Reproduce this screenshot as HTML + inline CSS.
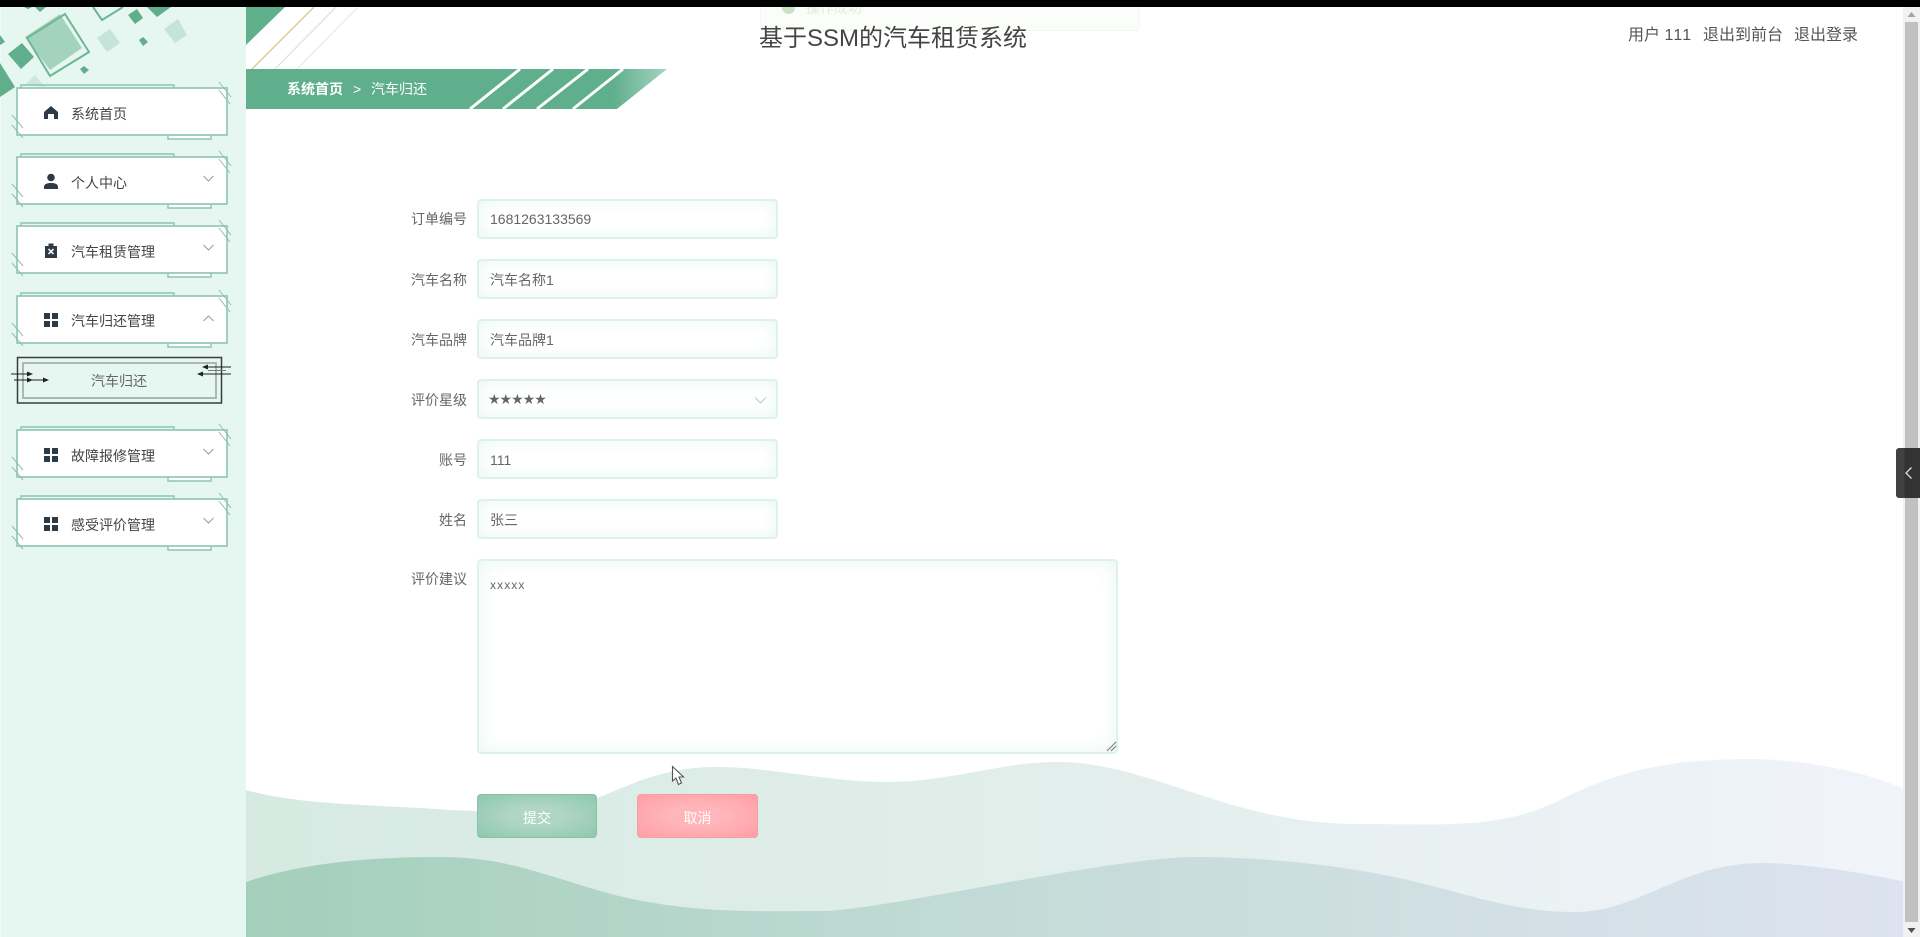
<!DOCTYPE html>
<html><head><meta charset="utf-8"><title>汽车归还</title>
<style>
*{box-sizing:border-box}
html,body{margin:0;padding:0;width:1920px;height:937px;overflow:hidden;background:#fff}
body{position:relative;font-family:"Liberation Sans","Noto Sans CJK SC",sans-serif;color:#606266;font-size:14px}
#w{position:absolute;left:0;top:0;width:1920px;height:937px;filter:blur(.35px)}
.a{position:absolute;white-space:nowrap}
.m{left:71px;width:130px;height:20px;line-height:20px;font-size:14px;color:#444;top:0;margin-top:.5px}
.l{left:367px;width:100px;height:20px;line-height:20px;text-align:right;color:#666;font-size:14px;margin-top:1px}
.i{left:477px;width:301px;height:40px;border:2px solid #dcf2ea;border-radius:4px;background:#fff;box-shadow:inset 0 0 16px #e8f7f2;line-height:36px;padding-left:11px;color:#666;font-size:14px}
.c{line-height:38px}
.b{top:794px;height:44px;border-radius:4px;color:#fff;text-align:center;line-height:46px;font-size:14px}
</style></head>
<body><div id="w">
<div class="a" style="left:0;top:0;width:246px;height:937px;background:#e5f7f0;border-left:1px solid #f2f8f5"></div>

<svg class="a" style="left:0;top:0" width="1920" height="937" viewBox="0 0 1920 937">
<defs>
<linearGradient id="w1" x1="245" x2="1906" y1="0" y2="0" gradientUnits="userSpaceOnUse"><stop offset="0" stop-color="#d6eae2"/><stop offset=".5" stop-color="#e2eeeb"/><stop offset="1" stop-color="#f1f4fb"/></linearGradient>
<linearGradient id="w2" x1="245" x2="1906" y1="0" y2="0" gradientUnits="userSpaceOnUse"><stop offset="0" stop-color="#a3cfbb"/><stop offset=".5" stop-color="#c6dcd9"/><stop offset="1" stop-color="#dde3f0"/></linearGradient>
<linearGradient id="bc" x1="246" x2="667" y1="0" y2="0" gradientUnits="userSpaceOnUse"><stop offset="0" stop-color="#5fae8c"/><stop offset=".87" stop-color="#5fae8c"/><stop offset="1" stop-color="#a5d4c0"/></linearGradient>
<symbol id="card" viewBox="0 0 240 70" width="240" height="70">
<path d="M21 15V12H174V15" fill="none" stroke="#8cc5ad" stroke-width="1.4"/>
<path d="M168 62V66H211V62" fill="#fff" stroke="#8cc5ad" stroke-width="1.4"/>
<rect x="17" y="15" width="210" height="47" fill="#fff" stroke="#8cc5ad" stroke-width="1.6"/>
<path d="M219 9L231 24M219 17L230 31M12 42L23 55M12 52L23 65" stroke="#8fbfaa" stroke-width="1" fill="none"/>
</symbol>
</defs>

<path d="M24 7L28 9 32 7ZM35 7L40 12 46 7Z" fill="#5fae8c"/>
<path d="M147 7H171L157 17Z" fill="#5fae8c"/>
<path d="M93 7L102 20 123 7" fill="none" stroke="#6fb696" stroke-width="2"/>
<path d="M128 15L137 9 143 18 135 24Z" fill="#5fae8c"/>
<path d="M0 63L15 87 0 97ZM0 35L5 42 0 45Z" fill="#5fae8c"/>
<path d="M8 54L22 43 34 57 21 69Z" fill="#5fae8c"/>
<path d="M97 38L110 29 120 43 107 52Z" fill="#c4e4d8"/>
<path d="M164 29L178 19 187 35 175 43Z" fill="#c4e4d8"/>
<path d="M139 40L143 37 148 42 143 46Z" fill="#5fae8c"/>
<path d="M80 69L84 66 89 70 84 74Z" fill="#5fae8c"/>
<path d="M25 85L35 75 45 87Z" fill="#cde9de"/>
<path d="M25 37L60 14 82 48 50 70Z" fill="#a3d3bd"/>
<path d="M27 38L65 14 89 52 50 76Z" fill="none" stroke="#6fb696" stroke-width="2"/>

<path d="M246 7H285L246 45Z" fill="#5fae8c"/>
<path d="M252 69L314 7" stroke="#d8cd92" stroke-width="1.5"/>
<path d="M275 69L336 7" stroke="#e2e2e2" stroke-width="1.3"/>
<path d="M297 69L358 7" stroke="#ececec" stroke-width="1.3"/>

<path d="M246 69H667L617 109H246Z" fill="url(#bc)"/>
<path d="M470 109L520 69M503 109L553 69M537 109L588 69M573 109L623 69" stroke="#fff" stroke-width="3"/>

<path d="M246 790C300 806 390 805 450 810C500 812 560 815 600 797C640 780 670 767 717 767C770 767 830 782 886 782C950 782 1000 762 1057 762C1150 762 1230 824 1356 824C1440 824 1500 830 1560 800C1620 770 1670 759 1751 759C1790 759 1860 768 1906 790V937H246Z" fill="url(#w1)"/>
<path d="M246 882C310 860 390 857 437 857C500 857 530 870 597 890C680 915 760 911 822 911C880 911 1110 857 1195 857C1260 857 1350 865 1420 883C1480 898 1520 912 1575 912C1640 912 1680 863 1762 863C1800 863 1860 872 1906 882V937H246Z" fill="url(#w2)"/>

<use href="#card" x="0" y="73"/>
<use href="#card" x="0" y="142"/>
<use href="#card" x="0" y="211"/>
<use href="#card" x="0" y="281"/>
<use href="#card" x="0" y="415"/>
<use href="#card" x="0" y="484"/>

<rect x="17.5" y="357.5" width="204" height="45.5" fill="none" stroke="#3a3f3d" stroke-width="1.5"/>
<rect x="23" y="363" width="193" height="35" fill="none" stroke="#a8b8b2" stroke-width="2"/>
<g stroke="#222" stroke-width="1" fill="#222">
<path d="M11 374H29M14 380H45M231 367H206M231 374H201" fill="none"/>
<path d="M33 374L27 371.5V376.5ZM49 380L43 377.5V382.5ZM202 367L208 364.5V369.5ZM197 374L203 371.5V376.5ZM33 380L27 377.5V382.5Z" stroke="none"/>
</g>
<path d="M208 370.5H226" stroke="#777" stroke-width="1"/>

<g fill="#2f3a47">
<path d="M51 106L58 112V119H54V114H48V119H44V112Z"/>
<circle cx="51" cy="177.5" r="3.8"/><path d="M44 189V187C44 184 47 183 51 183S58 184 58 187V189Z"/>
<path d="M45 246H48.5V243.5H53.5V246H57V258H45Z"/><path d="M48.5 249L53.5 254M53.5 249L48.5 254" stroke="#fff" stroke-width="1.5" fill="none"/>
<path d="M44 313H50V319H44ZM52 313H58V319H52ZM44 321H50V327H44ZM52 321H58V327H52Z"/>
<path d="M44 448H50V454H44ZM52 448H58V454H52ZM44 456H50V462H44ZM52 456H58V462H52Z"/>
<path d="M44 517H50V523H44ZM52 517H58V523H52ZM44 525H50V531H44ZM52 525H58V531H52Z"/>
</g>
<g fill="none" stroke="#9a9fa5" stroke-width="1.1">
<path d="M203.5 176L208.5 181L213.5 176"/>
<path d="M203.5 245L208.5 250L213.5 245"/>
<path d="M203.5 321L208.5 316L213.5 321"/>
<path d="M203.5 449L208.5 454L213.5 449"/>
<path d="M203.5 518L208.5 523L213.5 518"/>
</g>
</svg>

<div class="a m" style="top:103px">系统首页</div>
<div class="a m" style="top:172px">个人中心</div>
<div class="a m" style="top:241px">汽车租赁管理</div>
<div class="a m" style="top:310px">汽车归还管理</div>
<div class="a" style="left:60px;width:118px;top:371px;height:20px;line-height:20px;text-align:center;color:#666">汽车归还</div>
<div class="a m" style="top:445px">故障报修管理</div>
<div class="a m" style="top:514px">感受评价管理</div>

<div class="a" style="left:760px;top:7px;width:380px;height:24px;background:#fbfdfa;border:1px solid #f6f8f5;border-top:0;border-radius:0 0 4px 4px"></div>
<div class="a" style="left:782px;top:7px;width:13px;height:7px;background:#c8e3be;border-radius:0 0 7px 7px"></div>
<div class="a" style="left:806px;top:1px;height:15px;line-height:15px;font-size:14px;color:#e0eeda">操作成功</div>

<div class="a" style="left:659px;width:468px;top:23px;height:32px;line-height:32px;text-align:center;font-size:24px;color:#444">基于SSM的汽车租赁系统</div>
<div class="a" style="left:1628px;top:25px;height:22px;line-height:22px;font-size:16px;color:#555">用户 <span style="letter-spacing:1.2px">111</span></div>
<div class="a" style="left:1703px;top:25px;height:22px;line-height:22px;font-size:16px;color:#555">退出到前台</div>
<div class="a" style="left:1794px;top:25px;height:22px;line-height:22px;font-size:16px;color:#555">退出登录</div>

<div class="a" style="left:287px;top:79px;height:20px;line-height:20px;font-weight:bold;color:#fff">系统首页</div>
<div class="a" style="left:353px;top:79px;height:20px;line-height:20px;color:#fff">&gt;</div>
<div class="a" style="left:371px;top:79px;height:20px;line-height:20px;color:#fff">汽车归还</div>

<div class="a l" style="top:208px">订单编号</div><div class="a i" style="top:199px">1681263133569</div>
<div class="a l" style="top:269px">汽车名称</div><div class="a i c" style="top:259px">汽车名称1</div>
<div class="a l" style="top:329px">汽车品牌</div><div class="a i c" style="top:319px">汽车品牌1</div>
<div class="a l" style="top:389px">评价星级</div><div class="a i" style="top:379px;padding-left:9px;line-height:39px;font-size:14px;letter-spacing:-1px;font-family:'DejaVu Sans',sans-serif">★★★★★</div>
<svg class="a" style="left:754px;top:396px" width="13" height="9"><path d="M1 1.5L6.500 7L12 1.500" fill="none" stroke="#c4c8cc" stroke-width="1.1"/></svg>
<div class="a l" style="top:449px">账号</div><div class="a i c" style="top:439px">111</div>
<div class="a l" style="top:509px">姓名</div><div class="a i c" style="top:499px">张三</div>
<div class="a l" style="top:568px">评价建议</div>
<div class="a i" style="top:559px;width:641px;height:195px;line-height:20px;padding-top:14px;font-size:12px;letter-spacing:1.1px;box-shadow:inset 0 0 20px #e8f7f2">xxxxx</div>
<svg class="a" style="left:1106px;top:741px" width="11" height="11"><path d="M1 10L10 1M5 10L10 5" stroke="#777" stroke-width="1"/></svg>

<div class="a b" style="left:477px;width:120px;border:1px solid #86c3a8;background:radial-gradient(ellipse at center,#b0d6c6 30%,#8ec7ae 100%)">提交</div>
<div class="a b" style="left:637px;width:121px;border:1px solid #f2a0a5;background:radial-gradient(ellipse at center,#ffb6bb 30%,#ff9fa4 100%)">取消</div>

<svg class="a" style="left:670px;top:765px" width="16" height="22"><path d="M2.500 1.500V16L6 13L8.500 19.500L11.500 18L9 12H13.500Z" fill="#fff" stroke="#555" stroke-width="1.1"/></svg>

<div class="a" style="left:1903px;top:7px;width:17px;height:930px;background:#f1f1f1"></div>
<div class="a" style="left:1905px;top:22px;width:13px;height:900px;background:#c1c1c1"></div>
<svg class="a" style="left:1903px;top:7px" width="17" height="930"><path d="M8.500 5L12.500 10H4.500Z" fill="#a3a3a3"/><path d="M8.500 926L4.500 921H12.500Z" fill="#505050"/></svg>

<div class="a" style="left:1896px;top:448px;width:24px;height:50px;background:linear-gradient(90deg,#414141 0,#414141 35%,#333 35%);border-radius:3px 0 0 3px"></div>
<svg class="a" style="left:1904px;top:466px" width="10" height="14"><path d="M7.500 1.500L2 7L7.500 12.500" fill="none" stroke="#ddd" stroke-width="1.3"/></svg>
</div>
<div class="a" style="left:0;top:0;width:1920px;height:7px;background:#000"></div>
</body></html>
